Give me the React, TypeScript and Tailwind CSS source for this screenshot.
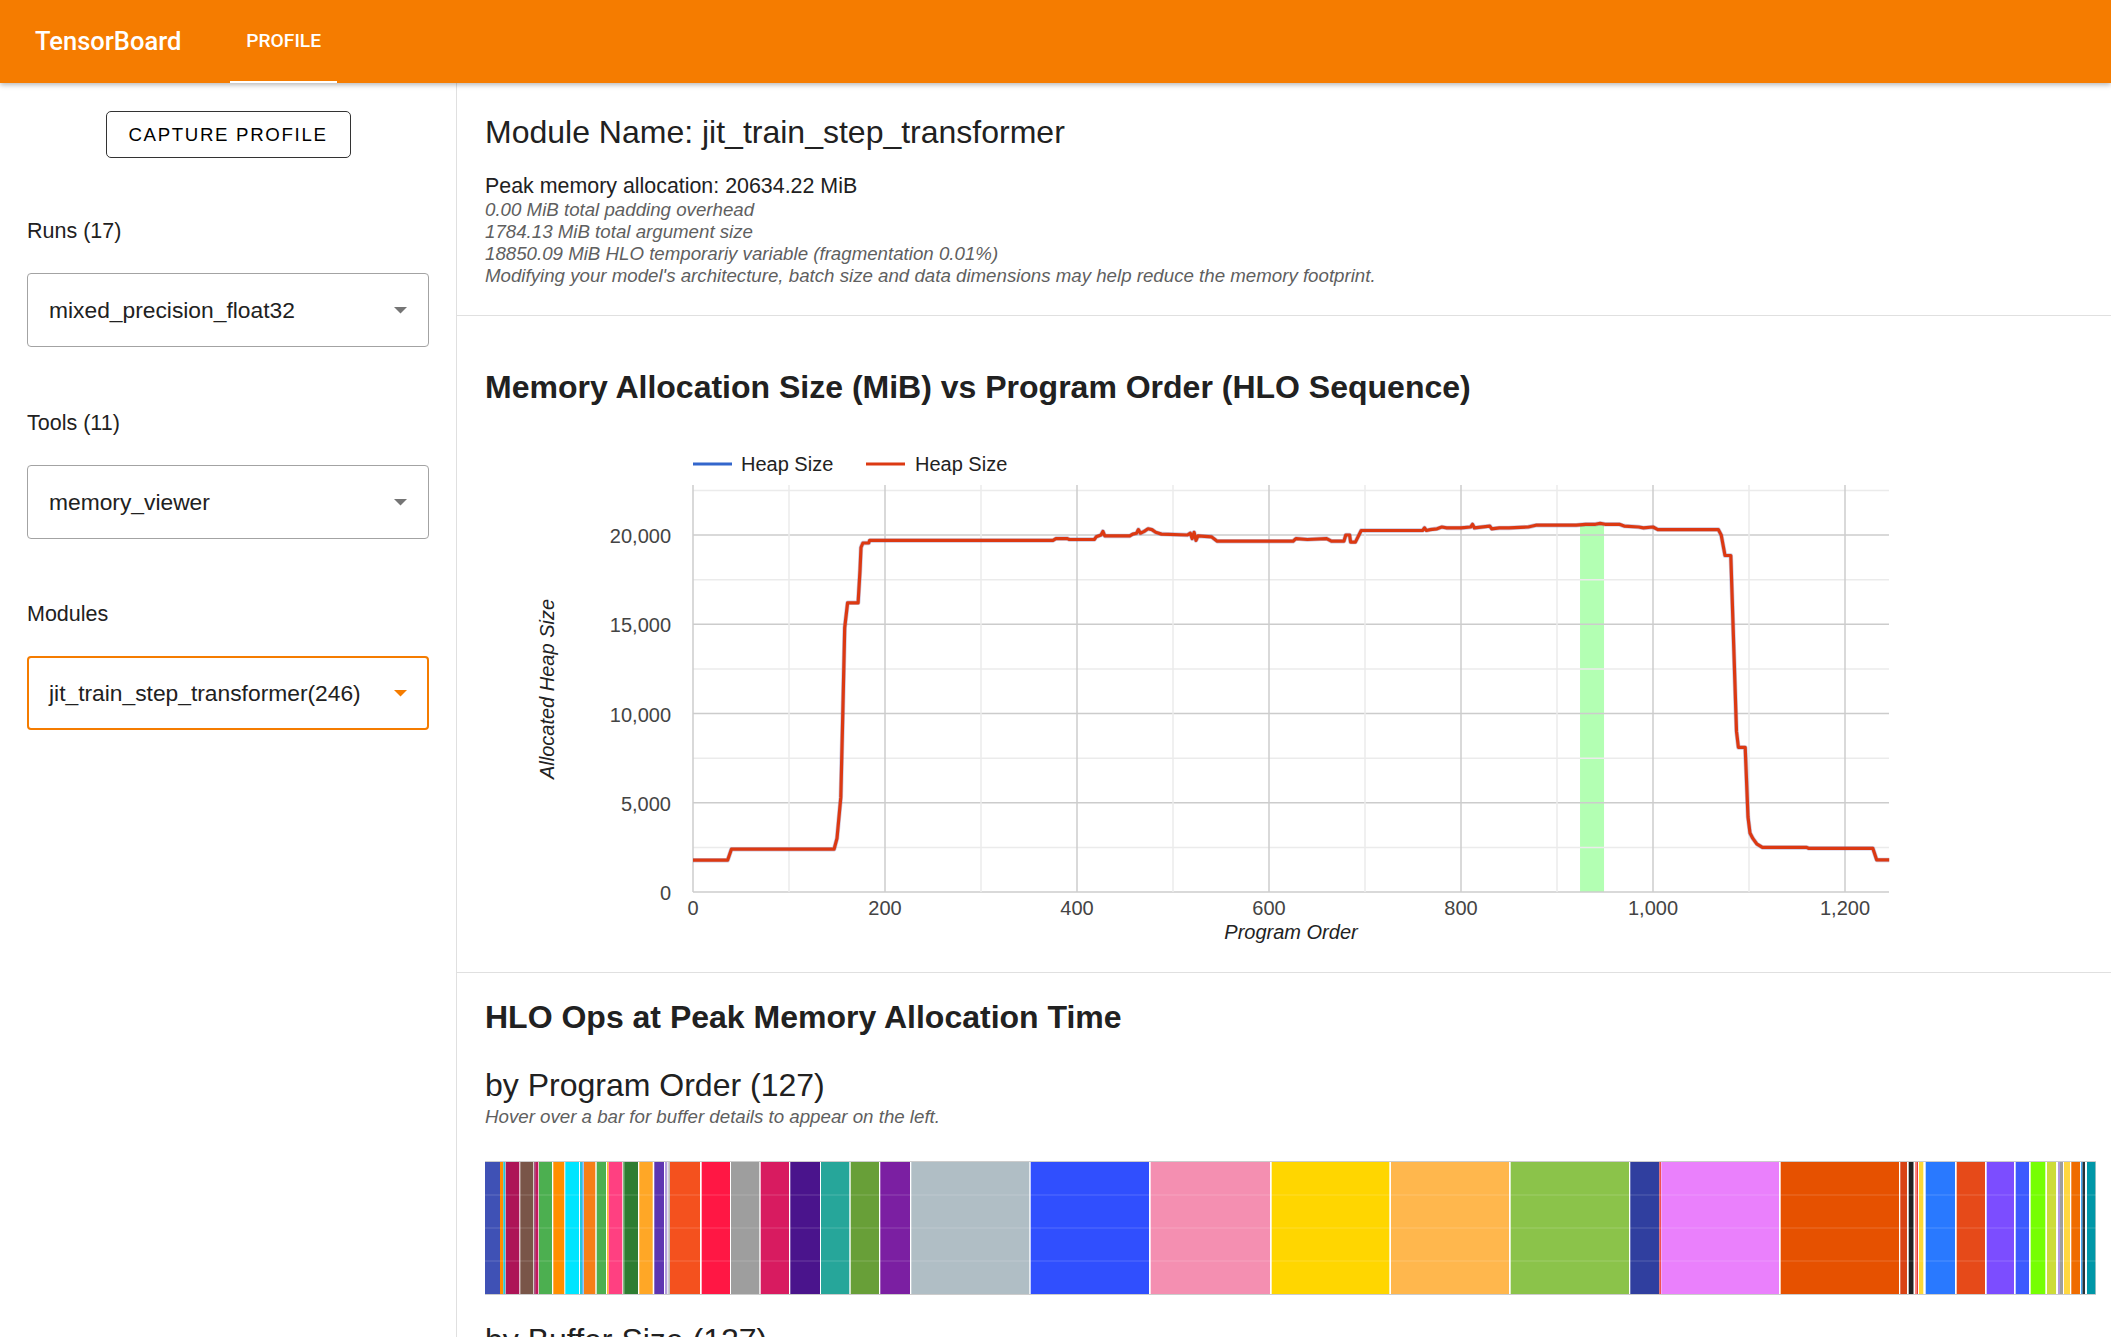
import React from "react";

const heap: [number, number][] = [
  [0, 1784], [36, 1784], [40, 2400], [147, 2400], [150, 3000], [154, 5300], [156, 10000], [158, 14800],
  [161, 16200], [172, 16200], [174, 18000], [175, 19300], [177, 19550], [183, 19550], [184, 19700],
  [375, 19700], [378, 19800], [390, 19800], [392, 19750], [418, 19750], [420, 19900], [425, 20000],
  [427, 20200], [429, 19950], [455, 19950], [458, 20050], [462, 20100], [464, 20300], [466, 20100],
  [470, 20200], [474, 20350], [478, 20300], [482, 20150], [488, 20050], [515, 20000], [518, 20100],
  [520, 19800], [522, 20150], [524, 19700], [526, 19950], [540, 19900], [546, 19650], [625, 19650],
  [628, 19800], [640, 19750], [660, 19800], [665, 19650], [678, 19650], [680, 20000], [684, 20000],
  [685, 19600], [690, 19600], [696, 20250], [760, 20250], [762, 20400], [764, 20250], [768, 20300],
  [775, 20350], [780, 20450], [785, 20400], [800, 20400], [810, 20450], [812, 20600], [814, 20400],
  [830, 20500], [832, 20350], [840, 20400], [850, 20400], [870, 20450], [878, 20550], [920, 20550],
  [930, 20600], [940, 20600], [945, 20650], [950, 20600], [965, 20600], [970, 20500], [985, 20450],
  [990, 20400], [1000, 20450], [1005, 20300], [1068, 20300], [1071, 20000], [1075, 18850], [1081, 18850],
  [1084, 14000], [1087, 9000], [1089, 8100], [1096, 8100], [1099, 4200], [1101, 3300], [1104, 3000],
  [1108, 2700], [1114, 2500], [1160, 2500], [1162, 2450], [1229, 2450], [1233, 1800], [1246, 1800],
];

// x offsets are page pixels, bar starts at 485
const segments: [number, number, string][] = [
  [484.7, 500, "#3f51b5"], [500, 503.3, "#ff8f00"], [503.3, 505.3, "#26c6da"], [505.7, 519.3, "#ad1457"],
  [520.3, 533.3, "#795548"], [534.3, 535.7, "#880e4f"], [535.7, 538.3, "#c2185b"], [539, 552, "#4caf50"],
  [553.3, 564.3, "#ff8f00"], [565.3, 579, "#00e5ff"], [580, 582, "#26c6da"], [582, 583.7, "#64b5f6"],
  [584, 595.3, "#f57f17"], [596.7, 606, "#4caf50"], [607, 608.7, "#fbc02d"], [608.7, 622.3, "#ff4081"],
  [623.3, 624.3, "#43a047"], [624.3, 638, "#2e7d32"], [639.3, 652.7, "#ffa726"], [654.3, 664, "#5e35b1"],
  [665, 667.3, "#b39ddb"], [668.3, 670, "#bdbdbd"], [670, 700, "#f4511e"], [701.7, 730, "#ff1744"],
  [731, 759.3, "#9e9e9e"], [760.7, 789, "#d81b60"], [790.3, 820, "#4a148c"], [821, 849.3, "#26a69a"],
  [850.7, 879, "#689f38"], [880.3, 910, "#7b1fa2"], [911.3, 1029.3, "#b0bec5"], [1030.7, 1149, "#304ffe"],
  [1150.7, 1270, "#f48fb1"], [1271.7, 1389.3, "#ffd600"], [1391, 1509, "#ffb74d"], [1510.7, 1629, "#8bc34a"],
  [1630.3, 1659.3, "#303f9f"], [1659.3, 1661, "#ef5350"], [1661.3, 1779, "#ea80fc"], [1780.7, 1899, "#e65100"],
  [1900.3, 1907, "#d84315"], [1908.7, 1913.5, "#212121"], [1915, 1916.5, "#ff8a80"], [1916.5, 1918, "#e53935"],
  [1919, 1923.3, "#fdd835"], [1925.7, 1955, "#2979ff"], [1956.7, 1985, "#e64a19"], [1986.7, 2014, "#7c4dff"],
  [2015.7, 2029, "#3d5afe"], [2030.7, 2045.3, "#76ff03"], [2047, 2056, "#cddc39"], [2058, 2060, "#b39ddb"],
  [2060, 2063, "#9e9e9e"], [2064, 2070, "#ffd740"], [2071.3, 2080, "#ef6c00"], [2081, 2082.5, "#42a5f5"],
  [2082.5, 2085, "#263238"], [2087, 2095.3, "#0097a7"],
];

const PX0 = 208;
const PY0 = 452;
const xu = (u: number) => PX0 + u * 0.96;
const yv = (v: number) => PY0 - (v * 357) / 20000;

function Dropdown({ value, active }: { value: string; active?: boolean }) {
  return (
    <div
      className={
        "flex h-[74px] items-center justify-between rounded-[4px] text-[22.8px] text-[#212121] " +
        (active ? "border-2 border-[#f57c00] pl-[20px] pr-[20px]" : "border border-[#a3a3a3] pl-[21px] pr-[21px]")
      }
    >
      <span>{value}</span>
      <svg width="13" height="7" viewBox="0 0 13 7">
        <path d="M0 0 L13 0 L6.5 6.5 Z" fill={active ? "#f57c00" : "#757575"} />
      </svg>
    </div>
  );
}

function HeapChart() {
  const vLines = Array.from({ length: 13 }, (_, i) => i * 100);
  const hLines = Array.from({ length: 10 }, (_, i) => i * 2500);
  const pts = heap.map(([u, v]) => `${xu(u).toFixed(1)},${yv(v).toFixed(1)}`).join(" ");
  return (
    <svg width="1611" height="512" className="block font-['Liberation_Sans',Arial,sans-serif]">
      <line x1="208" y1="24" x2="247" y2="24" stroke="#3366cc" strokeWidth="3" />
      <text x="256" y="24" dominantBaseline="central" fontSize="20" fill="#222">Heap Size</text>
      <line x1="381" y1="24" x2="420" y2="24" stroke="#dc3912" strokeWidth="3" />
      <text x="430" y="24" dominantBaseline="central" fontSize="20" fill="#222">Heap Size</text>

      <rect x={xu(924)} y={yv(20550)} width={xu(949) - xu(924)} height={PY0 - yv(20550)} fill="#b3ffb3" />

      {hLines.map((v) => (
        <line key={"h" + v} x1={PX0} x2="1404" y1={yv(v)} y2={yv(v)} stroke={v % 5000 === 0 ? "#cccccc" : "#ebebeb"} strokeWidth="1.5" />
      ))}
      {vLines.map((u) => (
        <line key={"v" + u} x1={xu(u)} x2={xu(u)} y1="45" y2={PY0} stroke={u % 200 === 0 ? "#cccccc" : "#ebebeb"} strokeWidth="1.5" />
      ))}

      {[0, 5000, 10000, 15000, 20000].map((v) => (
        <text key={"yl" + v} x="186" y={yv(v) + 1} textAnchor="end" dominantBaseline="central" fontSize="20" fill="#444">
          {v.toLocaleString("en-US")}
        </text>
      ))}
      {[0, 200, 400, 600, 800, 1000, 1200].map((u) => (
        <text key={"xl" + u} x={xu(u)} y="468" textAnchor="middle" dominantBaseline="central" fontSize="20" fill="#444">
          {u.toLocaleString("en-US")}
        </text>
      ))}
      <text x="806" y="492" textAnchor="middle" dominantBaseline="central" fontSize="20" fontStyle="italic" fill="#222">
        Program Order
      </text>
      <text
        x="62"
        y="249"
        textAnchor="middle"
        dominantBaseline="central"
        fontSize="20"
        fontStyle="italic"
        fill="#222"
        transform="rotate(-90 62 249)"
      >
        Allocated Heap Size
      </text>

      <polyline points={pts} fill="none" stroke="#6a5a9a" strokeOpacity="0.35" strokeWidth="4.5" strokeLinejoin="round" />
      <polyline points={pts} fill="none" stroke="#dc3912" strokeWidth="3.2" strokeLinejoin="round" />
    </svg>
  );
}

function OpsBar() {
  return (
    <svg width="1611" height="134" className="block">
      <rect x="0.5" y="0.5" width="1610" height="133" fill="#fff" stroke="#cccccc" />
      {segments.map(([a, b, c], i) => (
        <rect key={i} x={a - 485} y="1" width={Math.max(b - a, 0.8)} height="132" fill={c} />
      ))}
      {[34, 67, 100].map((y) => (
        <line key={y} x1="0" x2="1611" y1={y} y2={y} stroke="#ffffff" strokeOpacity="0.18" />
      ))}
    </svg>
  );
}

export default function App() {
  return (
    <div className="flex h-screen flex-col overflow-hidden bg-white font-['Liberation_Sans',Arial,sans-serif] text-[#212121]">
      <header className="relative z-10 flex h-[83px] shrink-0 items-stretch bg-[#f57c00] text-white shadow-[0_2px_5px_rgba(0,0,0,0.28)]">
        <div className="flex items-center pl-[35px] font-['Roboto',sans-serif] text-[25.5px] font-medium">TensorBoard</div>
        <div className="ml-[49px] flex items-center border-b-2 border-white px-[16px] pt-[2px] font-['Roboto',sans-serif] text-[19.2px] font-medium">
          PROFILE
        </div>
      </header>

      <div className="flex min-h-0 flex-1">
        <aside className="w-[457px] shrink-0 border-r border-[#e0e0e0] px-[27px] pt-[28px]">
          <button className="mx-auto block h-[47px] w-[245px] rounded-[5px] border border-[#333] text-[18.67px] tracking-[1.67px] text-black">
            CAPTURE PROFILE
          </button>

          <div className="mt-[61px] text-[21.5px] leading-[25px]">Runs (17)</div>
          <div className="mt-[29px]">
            <Dropdown value="mixed_precision_float32" />
          </div>

          <div className="mt-[64px] text-[21.5px] leading-[25px]">Tools (11)</div>
          <div className="mt-[29px]">
            <Dropdown value="memory_viewer" />
          </div>

          <div className="mt-[63px] text-[21.5px] leading-[25px]">Modules</div>
          <div className="mt-[29px]">
            <Dropdown value="jit_train_step_transformer(246)" active />
          </div>
        </aside>

        <main className="min-w-0 flex-1">
          <section className="border-b border-[#e0e0e0] pb-[28px] pl-[28px] pt-[31px]">
            <h1 className="text-[32px] leading-[37px]">Module Name: jit_train_step_transformer</h1>
            <div className="mt-[23px] text-[21.4px] leading-[25px]">Peak memory allocation: 20634.22 MiB</div>
            <div className="text-[18.7px] italic leading-[22px] text-[#5f5f5f]">
              <div>0.00 MiB total padding overhead</div>
              <div>1784.13 MiB total argument size</div>
              <div>18850.09 MiB HLO temporariy variable (fragmentation 0.01%)</div>
              <div>Modifying your model's architecture, batch size and data dimensions may help reduce the memory footprint.</div>
            </div>
          </section>

          <section className="border-b border-[#e0e0e0] pb-[20px] pl-[28px] pt-[53px]">
            <h2 className="text-[32px] font-bold leading-[37px]">Memory Allocation Size (MiB) vs Program Order (HLO Sequence)</h2>
            <div className="mt-[34px]">
              <HeapChart />
            </div>
          </section>

          <section className="pl-[28px] pt-[26px]">
            <h2 className="text-[32px] font-bold leading-[37px]">HLO Ops at Peak Memory Allocation Time</h2>
            <h3 className="mt-[31px] text-[32px] leading-[37px]">by Program Order (127)</h3>
            <div className="mt-[2px] text-[18.7px] italic leading-[22px] text-[#5f5f5f]">
              Hover over a bar for buffer details to appear on the left.
            </div>
            <div className="mt-[33px]">
              <OpsBar />
            </div>
            <h3 className="mt-[27px] text-[32px] leading-[37px]">by Buffer Size (127)</h3>
          </section>
        </main>
      </div>
    </div>
  );
}
